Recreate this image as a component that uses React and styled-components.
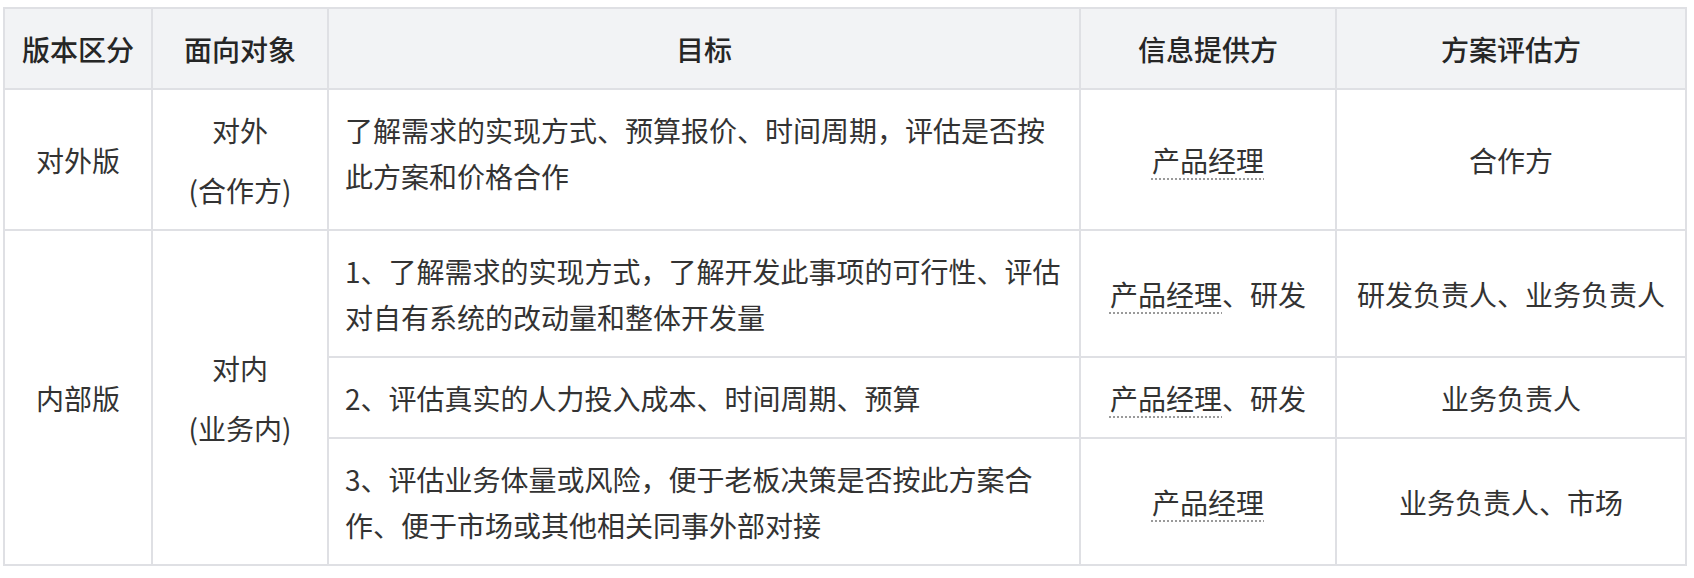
import React from "react";
import styled, { createGlobalStyle } from "styled-components";

const GlobalStyle = createGlobalStyle`
  body {
    margin: 0;
    background: #fff;
    font-family: "Noto Sans CJK SC", "Noto Sans", sans-serif;
  }
`;

const Page = styled.div`
  padding: 7px 0 0 3px;
`;

const Table = styled.table`
  width: 1682px;
  border-collapse: collapse;
  table-layout: fixed;
  font-size: 28px;
  line-height: 46px;
  color: #333;
`;

const HeadCell = styled.th`
  background: #f2f3f5;
  border: 2px solid #dfe0e4;
  padding: 17px 16px 16px;
  font-weight: 500;
  color: #262626;
  text-align: center;
  vertical-align: middle;
`;

const Cell = styled.td`
  border: 2px solid #dfe0e4;
  padding: 17px 16px 16px;
  text-align: ${({ $left }) => ($left ? "left" : "center")};
  vertical-align: ${({ $top }) => ($top ? "top" : "middle")};
  white-space: ${({ $left }) => ($left ? "normal" : "nowrap")};
`;

const Para = styled.p`
  margin: 0;
  & + & {
    margin-top: 14px;
  }
`;

const Term = styled.span`
  text-decoration-line: underline;
  text-decoration-style: dotted;
  text-decoration-color: #9a9a9a;
  text-decoration-thickness: 2px;
  text-underline-offset: 6px;
`;

const PM = () => <Term>产品经理</Term>;

const App = () => {
  return (
    <>
      <GlobalStyle />
      <Page>
        <Table>
          <colgroup>
            <col style={{ width: 148 }} />
            <col style={{ width: 176 }} />
            <col style={{ width: 752 }} />
            <col style={{ width: 256 }} />
            <col style={{ width: 350 }} />
          </colgroup>
          <thead>
            <tr>
              <HeadCell>版本区分</HeadCell>
              <HeadCell>面向对象</HeadCell>
              <HeadCell>目标</HeadCell>
              <HeadCell>信息提供方</HeadCell>
              <HeadCell>方案评估方</HeadCell>
            </tr>
          </thead>
          <tbody>
            <tr>
              <Cell>对外版</Cell>
              <Cell>
                <Para>对外</Para>
                <Para>(合作方)</Para>
              </Cell>
              <Cell $left $top>
                了解需求的实现方式、预算报价、时间周期，评估是否按此方案和价格合作
              </Cell>
              <Cell>
                <PM />
              </Cell>
              <Cell>合作方</Cell>
            </tr>
            <tr>
              <Cell rowSpan={3}>内部版</Cell>
              <Cell rowSpan={3}>
                <Para>对内</Para>
                <Para>(业务内)</Para>
              </Cell>
              <Cell $left $top>
                1、了解需求的实现方式，了解开发此事项的可行性、评估对自有系统的改动量和整体开发量
              </Cell>
              <Cell>
                <PM />、研发
              </Cell>
              <Cell>研发负责人、业务负责人</Cell>
            </tr>
            <tr>
              <Cell $left $top>
                2、评估真实的人力投入成本、时间周期、预算
              </Cell>
              <Cell>
                <PM />、研发
              </Cell>
              <Cell>业务负责人</Cell>
            </tr>
            <tr>
              <Cell $left $top>
                3、评估业务体量或风险，便于老板决策是否按此方案合作、便于市场或其他相关同事外部对接
              </Cell>
              <Cell>
                <PM />
              </Cell>
              <Cell>业务负责人、市场</Cell>
            </tr>
          </tbody>
        </Table>
      </Page>
    </>
  );
};

export default App;
